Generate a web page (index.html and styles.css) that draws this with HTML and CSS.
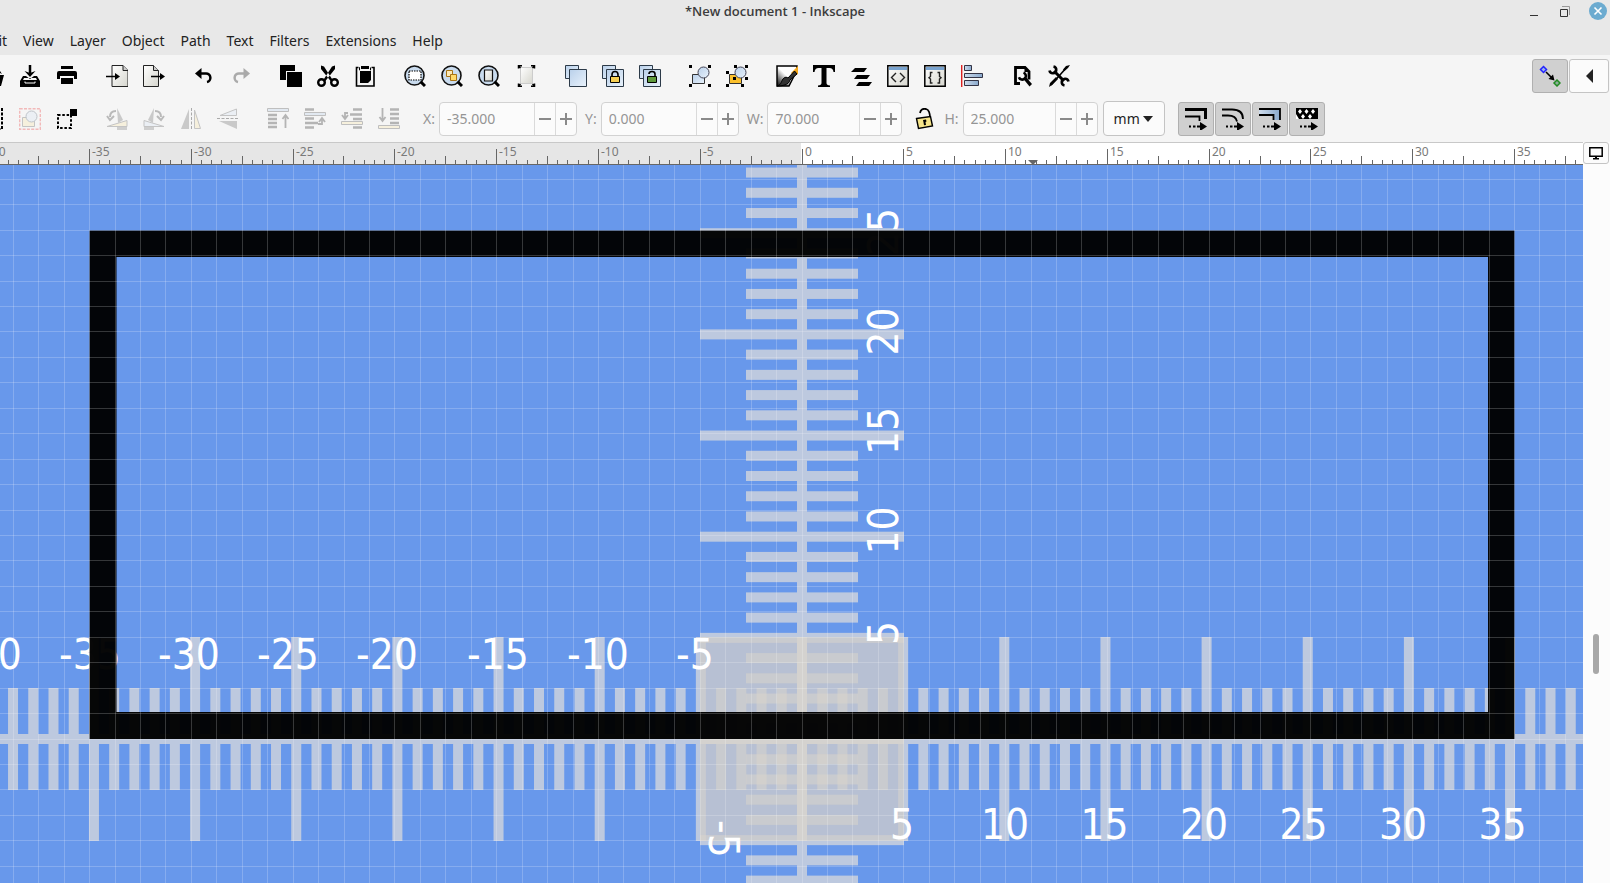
FILE: index.html
```html
<!DOCTYPE html>
<html lang="en">
<head>
<meta charset="utf-8">
<title>*New document 1 - Inkscape</title>
<link rel="stylesheet" href="styles.css">
</head>
<body>
<svg class="defs" aria-hidden="true">
  <defs>
    <linearGradient id="page" x1="0" y1="0" x2="1" y2="1"><stop offset="0" stop-color="#fff"/><stop offset="1" stop-color="#d6d6ce"/></linearGradient>
    <linearGradient id="blue" x1="0" y1="0" x2="1" y2="1"><stop offset="0" stop-color="#b9d0ea"/><stop offset="1" stop-color="#e9f2fb"/></linearGradient>
    <linearGradient id="ink" x1="0" y1="1" x2="1" y2="0"><stop offset="0" stop-color="#000"/><stop offset=".5" stop-color="#fff"/></linearGradient>
    <linearGradient id="fade" x1="0" y1="0" x2="1" y2="0"><stop offset="0" stop-color="#cfdcec"/><stop offset="1" stop-color="#88a8cc"/></linearGradient>
    <g id="lens"><circle cx="10.500" cy="10.500" r="9.500" fill="#c9dbee" stroke="#111" stroke-width="1.600"/><path d="M16.500 16.500l4.500 4.500" stroke="#000" stroke-width="3"/></g>
    <g id="two" stroke="#2c3a48" fill="url(#blue)"><path d="M.5.500h13v13H.500z"/><path d="M4.500 4.500h17v17h-17z"/></g>
    <g id="arrow"><path d="M4 18.500h2m2 0h2.500m1.500 0h5" stroke="#000" stroke-width="2"/><path d="M15 14l7 4.500-7 4.500z"/></g>
    <g id="corners"><path d="M0 0h3v3H0zM19 0h3v3h-3zM0 19h3v3H0zM19 19h3v3h-3z"/></g>
  </defs>
</svg>
<div class="app">
  <header class="titlebar">
    <h1>*New document 1 - Inkscape</h1>
    <div class="window-controls">
      <button aria-label="Minimize"><svg width="12" height="18"><path d="M1 13.500h8" stroke="#333"/></svg></button>
      <button aria-label="Restore"><svg width="12" height="18"><path d="M3 4.500h7.500V13" fill="none" stroke="#999"/><path d="M1.500 7.500h7v7h-7z" fill="none" stroke="#333"/></svg></button>
      <button class="close" aria-label="Close"><svg width="18" height="18"><path d="M5.500 5.500l7 7m0-7l-7 7" stroke="#fff" stroke-width="1.600"/></svg></button>
    </div>
  </header>
  <nav class="menubar">
    <button>Edit</button><button>View</button><button>Layer</button><button>Object</button><button>Path</button><button>Text</button><button>Filters</button><button>Extensions</button><button>Help</button>
  </nav>
  <div class="toolbar commands">
    <div class="group">
      <button aria-label="Open"><svg class="i" viewBox="0 0 22 22"><path d="M2 8h14l1 2h5l-3 11H3z"/><path d="M14 6h4l2 3"/></svg></button>
      <button aria-label="Save"><svg class="i" viewBox="0 0 22 22"><path d="M11 0v8" stroke="#000" stroke-width="2.500"/><path d="M5.500 6l5.500 6 5.500-6-5.500 2zM4 11h3l4 3 4-3h3l3 5v6H1v-6zM4 15h14l-1-2H5z" fill-rule="evenodd"/><path d="M6 16.500v1.500h10v-1.500" stroke="#fff" fill="none"/></svg></button>
      <button aria-label="Print"><svg class="i" viewBox="0 0 22 22"><path d="M5 1h12v3H5zM3 6h16q2 0 2 2v6h-3v-3H4v3H1V8q0-2 2-2zM5 13h12v6H5z"/></svg></button>
    </div>
    <div class="group">
      <button aria-label="Import"><svg class="i" viewBox="0 0 22 22"><path d="M6 .500h11l5 5v16H6z" fill="url(#page)" stroke="#222"/><path d="M17 .500v5h5" fill="#ccc" stroke="#222"/><path d="M0 11.500h11" stroke="#000" stroke-width="1.500"/><path d="M9 8l5 3.500L9 15z"/></svg></button>
      <button aria-label="Export"><svg class="i" viewBox="0 0 22 22"><path d="M.500.500h10l5 5v16H.500z" fill="url(#page)" stroke="#222"/><path d="M10.500.500v5h5" fill="#ccc" stroke="#222"/><path d="M8 11.500h11" stroke="#000" stroke-width="1.500"/><path d="M17 8l5 3.500-5 3.500z"/></svg></button>
    </div>
    <div class="group">
      <button aria-label="Undo"><svg class="i" viewBox="0 0 22 22"><path d="M6 8.500h7a4.300 4.300 0 0 1 1 8.500" fill="none" stroke="#000" stroke-width="2.500"/><path d="M2 8.500L8.500 3v11z"/></svg></button>
      <button aria-label="Redo" disabled><svg class="i" viewBox="0 0 22 22"><g transform="matrix(-1 0 0 1 22 0)"><path d="M6 8.500h7a4.300 4.300 0 0 1 1 8.500" fill="none" stroke="#000" stroke-width="2.500"/><path d="M2 8.500L8.500 3v11z"/></g></svg></button>
    </div>
    <div class="group">
      <button aria-label="Copy"><svg class="i" viewBox="0 0 22 22"><path d="M0 0h15v6H6v9H0zM7 7h15v15H7z"/></svg></button>
      <button aria-label="Cut"><svg class="i" viewBox="0 0 22 22"><path d="M4 .500l3 1 9 14-2 1L4 4zM18 .500l-3 1-9 14 2 1L18 4z"/><g fill="none" stroke="#000" stroke-width="2.400"><circle cx="4.500" cy="17.500" r="3.300"/><circle cx="17.500" cy="17.500" r="3.300"/></g></svg></button>
      <button aria-label="Paste"><svg class="i" viewBox="0 0 22 22"><path d="M4.500 2.500H2.500v18.500h17.500V2.500h-2.500" fill="none" stroke="#000" stroke-width="1.600"/><path d="M7 1h8v3H7zM6 6h11v9l-3 3H6z"/><path d="M5.500 5.300V2.500H6m10.500 0v2.800" fill="none" stroke="#000"/></svg></button>
    </div>
    <div class="group">
      <button aria-label="Zoom selection"><svg class="i" viewBox="0 0 22 22"><use href="#lens"/><path d="M5 6h12v9H5z" fill="#fff" stroke="#000" stroke-width="1.200" stroke-dasharray="1.500 1"/></svg></button>
      <button aria-label="Zoom drawing"><svg class="i" viewBox="0 0 22 22"><use href="#lens"/><g fill="#fce9b8" stroke="#a87416"><path d="M5.500 5.500h6v6h-6z"/><path d="M9.500 9.500h6v6h-6z" fill="#ffd96a"/></g></svg></button>
      <button aria-label="Zoom page"><svg class="i" viewBox="0 0 22 22"><use href="#lens"/><path d="M6.500 5h8v11h-8z" fill="url(#page)" stroke="#111" stroke-width="1.200"/></svg></button>
      <button aria-label="Zoom page width"><svg class="i" viewBox="0 0 22 22"><path d="M5.500 2.500h12v16h-12z" fill="url(#page)" stroke="#ccc"/><path d="M3.500 3.500V.800H7M16 .800h3.500v2.700M3.500 18.500v2.700H7m9 0h3.500v-2.700M3.500 1l2 2M19.500 1l-2 2M3.500 21l2-2m14 2l-2-2" fill="none" stroke="#000" stroke-width="1.500"/></svg></button>
    </div>
    <div class="group">
      <button aria-label="Duplicate"><svg class="i" viewBox="0 0 22 22"><use href="#two"/></svg></button>
      <button aria-label="Clone"><svg class="i" viewBox="0 0 22 22"><use href="#two"/><path d="M10 12V9.500a3 3 0 0 1 6 0V12" fill="none" stroke="#000" stroke-width="1.600"/><path d="M8.500 11.500h9v6h-9z" fill="#f6cf52" stroke="#000"/></svg></button>
      <button aria-label="Unlink clone"><svg class="i" viewBox="0 0 22 22"><use href="#two"/><path d="M10 9a3 2.500 0 0 1 6 0v3" fill="none" stroke="#000" stroke-width="1.600"/><path d="M8.500 11.500h9v6h-9z" fill="#5f9a3c" stroke="#000"/></svg></button>
    </div>
    <div class="group">
      <button aria-label="Group"><svg class="i" viewBox="0 0 22 22"><path d="M3.500 9.500h12v9h-12z" fill="url(#blue)" stroke="#333"/><circle cx="14.500" cy="7.500" r="5.500" fill="url(#blue)" stroke="#445"/><use href="#corners"/></svg></button>
      <button aria-label="Ungroup"><svg class="i" viewBox="0 0 22 22"><path d="M3.500 9.500h12v9h-12z" fill="#fbc02c" stroke="#333"/><circle cx="14.500" cy="7.500" r="5.500" fill="url(#blue)" stroke="#445"/><path d="M8 0h3v3H8zM19 0h3v3h-3zM0 6h3v3H0zM19 12h3v3h-3zM0 19h3v3H0zM15 19h3v3h-3zM7 12h3v3H7z"/></svg></button>
    </div>
    <div class="group">
      <button aria-label="Fill and stroke"><svg class="i" viewBox="0 0 22 22"><path d="M1 1h20v4l-8 16H1z" fill="url(#ink)" stroke="#000" stroke-width="1.500"/><path d="M22 1v8l-4 2-3-3z" fill="#f4a71c"/><path d="M18.500 6l2.500 3-7 6c-1 5-8 6-13 6 5-1 4-6 7-8 1-1 3-1 4 0z" fill="#333" stroke="#000"/></svg></button>
      <button aria-label="Text and font"><svg class="i" viewBox="0 0 22 22"><path d="M0 0h22v7h-1.500q-.500-4-4-4H13.500v15q0 2 3.500 2.500V22H5v-1.500q3.500-.500 3.500-2.500V3H5.500q-3.500 0-4 4H0z"/></svg></button>
      <button aria-label="Layers"><svg class="i" viewBox="0 0 22 22"><path d="M5 3h12l-3 4H1zM7 10h13l-3 4H4zM9 17h13l-3 4H6z"/></svg></button>
      <button aria-label="XML editor"><svg class="i" viewBox="0 0 22 22"><path d="M.800.800h20.400v20.400H.800z" fill="url(#page)" stroke="#000" stroke-width="1.500"/><path d="M2 2h18v3H2z" fill="#79a3cf"/><path d="M9 8l-4.500 4.500L9 17m4-9l4.500 4.500L13 17" fill="none" stroke="#222" stroke-width="1.400"/></svg></button>
      <button aria-label="Selectors and CSS"><svg class="i" viewBox="0 0 22 22"><path d="M.800.800h20.400v20.400H.800z" fill="url(#page)" stroke="#000" stroke-width="1.500"/><path d="M2 2h18v3H2z" fill="#79a3cf"/><path d="M8.500 7.500h-2v4l-1.500 1.200 1.500 1.300v4h2m5-10.500h2v4l1.500 1.200-1.500 1.300v4h-2" fill="none" stroke="#222" stroke-width="1.400"/></svg></button>
      <button aria-label="Align and distribute"><svg class="i" viewBox="0 0 22 22"><path d="M.700 0v22" stroke="#d22" stroke-width="1.400"/><g fill="url(#fade)" stroke="#334"><path d="M3.500.500h7v5h-7z"/><path d="M3.500 8.500h18v4h-18z"/><path d="M3.500 15.500h14v5h-14z"/></g></svg></button>
    </div>
    <div class="group">
      <button aria-label="Document properties"><svg class="i" viewBox="0 0 22 22"><path d="M9 18.500H4.500v-16h9.500l4 4v8" fill="none" stroke="#000" stroke-width="2.800"/><path d="M13.500 2v5h5z"/><path d="M12.500 7.600a3.600 3.600 0 1 1-4.600 4.600" fill="none" stroke="#000" stroke-width="2.600"/><path d="M12 13.500l2.500-2 6.500 7.500-2.500 2.500z"/></svg></button>
      <button aria-label="Preferences"><svg class="i" viewBox="0 0 22 22"><path d="M3 20L19 2" stroke="#000" stroke-width="1.600"/><path d="M1 22l1-4 6-6 2 2-6 6zM22 0l-4 1-3 3.500 1.500 1.500L20 3z"/><path d="M6 6l10 10" stroke="#000" stroke-width="3"/><path d="M5.500 1.500a3.400 3.400 0 1 1-4 4M16.500 20.500a3.400 3.400 0 1 1 4-4" fill="none" stroke="#000" stroke-width="2.600"/></svg></button>
    </div>
    <div class="snap">
      <button class="toggle on" aria-label="Snap"><svg class="i" viewBox="0 0 22 22"><path d="M4.500 1.500l3 3-3 3-3-3z" fill="#9bb5ec" stroke="#22f" stroke-width="1.500"/><path d="M18 15l3 3-3 3-3-3z" fill="#8cae9a" stroke="#228b22" stroke-width="1.500"/><path d="M7 7l6 6" stroke="#000" stroke-width="1.600"/><path d="M15.500 15.500l-6-1.500 4.500-4.500z"/></svg></button>
      <button class="toggle more" aria-label="More snapping options"><svg width="8" height="14"><path d="M8 0v14L1 7z" fill="#222"/></svg></button>
    </div>
  </div>
  <div class="toolbar options">
    <div class="group">
      <button aria-label="Select all"><svg class="i" viewBox="0 0 22 22"><path d="M1 1h19v20H1z" fill="none" stroke="#000" stroke-width="2" stroke-dasharray="3 1.500"/></svg></button>
      <button aria-label="Deselect" disabled><svg class="i" viewBox="0 0 22 22"><path d="M.700.700h20.600v20.600H.700z" fill="none" stroke="#e33" stroke-width="1.400" stroke-dasharray="3 1.300"/><path d="M3.500 9.500h12v9h-12z" fill="#fbe6a8" stroke="#555"/><circle cx="12.500" cy="8.500" r="5.500" fill="#d5e2f2" stroke="#456"/></svg></button>
      <button aria-label="Touch selection"><svg class="i" viewBox="0 0 22 22"><path d="M2 7h13v13H2z" fill="none" stroke="#000" stroke-width="2" stroke-dasharray="2.500 1.800"/><path d="M14 1h7v7h-7z"/></svg></button>
    </div>
    <div class="group">
      <button aria-label="Rotate left" disabled><svg class="i" viewBox="0 0 22 22"><path d="M11 0l6 12-5 3z" fill="#666"/><path d="M1 18.500l20-6v6z" fill="#fbe6a8" stroke="#555"/><path d="M11 19h10v3H11z" fill="#777"/><path d="M10 3q-6 0-6 6M1 8l3 4 4-4" fill="none" stroke="#333" stroke-width="2"/></svg></button>
      <button aria-label="Rotate right" disabled><svg class="i" viewBox="0 0 22 22"><path d="M11 0L5 12l5 3z" fill="#666"/><path d="M21 18.500l-20-6v6z" fill="#d5e2f2" stroke="#555"/><path d="M1 19h10v3H1z" fill="#777"/><path d="M12 3q6 0 6 6M14 8l4 4 3-4" fill="none" stroke="#333" stroke-width="2"/></svg></button>
      <button aria-label="Flip horizontal" disabled><svg class="i" viewBox="0 0 22 22"><path d="M9 1v20H1z" fill="#666"/><path d="M11.500 0v22" stroke="#000" stroke-dasharray="3 1.500"/><path d="M14.500 2v18.500h6z" fill="#fbe6a8" stroke="#555"/></svg></button>
      <button aria-label="Flip vertical" disabled><svg class="i" viewBox="0 0 22 22"><path d="M20 13v8L2 13z" fill="#666"/><path d="M0 10.500h22" stroke="#000" stroke-dasharray="3 1.500"/><path d="M19.500 1v6.500H3z" fill="#d5e2f2" stroke="#555"/></svg></button>
    </div>
    <div class="group">
      <button aria-label="Raise to top" disabled><svg class="i" viewBox="0 0 22 22"><path d="M.500.500h21v3H.500z" fill="#b9d0ea" stroke="#444"/><path d="M1 7h9M1 11h9M1 15h9M1 19h9" stroke="#222" stroke-width="2.500"/><path d="M18.500 20V7m-3 4l3-4 3 4" fill="none" stroke="#222" stroke-width="1.800"/></svg></button>
      <button aria-label="Raise" disabled><svg class="i" viewBox="0 0 22 22"><path d="M1 1.500h9M1 10.500h9M1 15h13M1 19.500h9" stroke="#222" stroke-width="2.500"/><path d="M.500 4.500h21v3H.500z" fill="#b9d0ea" stroke="#444"/><path d="M14 16h4v-5m-3 3l3-4 3 4" fill="none" stroke="#222" stroke-width="1.800"/></svg></button>
      <button aria-label="Lower" disabled><svg class="i" viewBox="0 0 22 22"><path d="M12 1.500h9M9 6.500h12M12 11h9M12 19.500h9" stroke="#222" stroke-width="2.500"/><path d="M.500 13.500h21v3H.500z" fill="#fbe6a8" stroke="#444"/><path d="M7 5H4v5m-3-3l3 4 3-4" fill="none" stroke="#222" stroke-width="1.800"/></svg></button>
      <button aria-label="Lower to bottom" disabled><svg class="i" viewBox="0 0 22 22"><path d="M12 1.500h9M12 6h9M12 10.500h9M12 15h9" stroke="#222" stroke-width="2.500"/><path d="M.500 17.500h21v3H.500z" fill="#fbe6a8" stroke="#444"/><path d="M4.500 0v13m-3-4l3 4 3-4" fill="none" stroke="#222" stroke-width="1.800"/></svg></button>
    </div>
    <div class="fields">
      <label for="x">X:</label>
      <div class="spin wide"><input id="x" value="-35.000" disabled><button aria-label="Decrease X" disabled></button><button class="plus" aria-label="Increase X" disabled></button></div>
      <label for="y">Y:</label>
      <div class="spin wide"><input id="y" value="0.000" disabled><button aria-label="Decrease Y" disabled></button><button class="plus" aria-label="Increase Y" disabled></button></div>
      <label for="w">W:</label>
      <div class="spin"><input id="w" value="70.000" disabled><button aria-label="Decrease W" disabled></button><button class="plus" aria-label="Increase W" disabled></button></div>
      <button class="lock" aria-label="Lock ratio"><svg class="i" viewBox="0 0 22 22"><path d="M7 5q1-5 6-4 4 1 4 9" fill="none" stroke="#000" stroke-width="1.800"/><path d="M3.500 10.500l14-2 2 9.500-14 2.500z" fill="#f6e58a" stroke="#000" stroke-width="1.400"/><path d="M10 12l3-.500.500 2-1 .500.500 3-2 .300-.500-3z"/></svg></button>
      <label for="h">H:</label>
      <div class="spin"><input id="h" value="25.000" disabled><button aria-label="Decrease H" disabled></button><button class="plus" aria-label="Increase H" disabled></button></div>
      <div class="unit"><select aria-label="Unit"><option>mm</option></select><svg width="10" height="6"><path d="M0 0h10L5 6z" fill="#222"/></svg></div>
    </div>
    <div class="affect">
      <button class="toggle on" aria-label="Scale stroke width"><svg class="i" viewBox="0 0 22 22"><path d="M0 1.500h20.500V11" fill="none" stroke="#000" stroke-width="3"/><path d="M0 8.500h14.500V13" fill="none" stroke="#000" stroke-width="1.800"/><use href="#arrow"/></svg></button>
      <button class="toggle on" aria-label="Scale rounded corners"><svg class="i" viewBox="0 0 22 22"><path d="M0 1.500h10q11 0 11 9.500M0 7.500h6q8 0 9 6" fill="none" stroke="#000" stroke-width="1.800"/><use href="#arrow"/></svg></button>
      <button class="toggle on" aria-label="Move gradients"><svg class="i" viewBox="0 0 22 22"><path d="M0 1h21v11h-6V7H0z" fill="url(#fade)"/><path d="M0 1h21v11M0 7h14.500v5" fill="none" stroke="#000" stroke-width="1.800"/><use href="#arrow"/></svg></button>
      <button class="toggle on" aria-label="Move patterns"><svg class="i" viewBox="0 0 22 22"><path d="M0 0h22v11H0z"/><path d="M4 1l2 2.500L4 6 2 3.500zM10.500 1l2 2.500-2 2.500-2-2.500zM17 1l2 2.500L17 6l-2-2.500zM0 6l3 5H0zM7 6l2 2.500L7 11 5 8.500zM14 6l2 2.500-2 2.500-2-2.500z" fill="#fff"/><use href="#arrow"/></svg></button>
    </div>
  </div>
  <main class="workspace">
    <div class="view">
      <svg class="ruler" id="ruler" role="img" aria-label="Horizontal ruler"></svg>
      <svg class="canvas" id="canvas" role="img" aria-label="Drawing canvas"></svg>
    </div>
    <aside class="side">
      <button class="toggle display" aria-label="Display mode"><svg width="14" height="13"><path d="M.800.800h12.400v8.400H.800z" fill="none" stroke="#000" stroke-width="1.500"/><path d="M6 9h2v2h2v1.500H4V11h2z"/></svg></button>
      <div class="track"><div class="thumb"></div></div>
    </aside>
  </main>
</div>
<script src="canvas.js"></script>
</body>
</html>
```
FILE: styles.css
```css
* { box-sizing: border-box; }
body { margin: 0; font-family: "Noto Sans", "Open Sans", sans-serif; font-size: 14px; color: #222; background: #f5f5f5; overflow: hidden; }
.defs { position: absolute; width: 0; height: 0; }
.app { display: flex; flex-direction: column; height: 100vh; }
button { margin: 0; padding: 0; border: 0; background: none; font: inherit; color: inherit; display: flex; align-items: center; justify-content: center; flex: none; }
svg { display: block; }
.i { width: 22px; height: 22px; }

.titlebar { display: grid; grid-template-columns: 1fr auto 1fr; height: 24px; flex: none; margin-left: -60px; background: #e8e8e8; }
.titlebar h1 { grid-column: 2; margin: 0; font-family: "Open Sans", "Noto Sans", sans-serif; font-size: 13px; font-weight: 600; line-height: 22px; color: #3c3c3c; }
.window-controls { display: flex; justify-content: flex-end; align-items: flex-start; gap: 18px; padding: 2px 3px 0 0; }
.close { border-radius: 9px; background: #6cabd0; }

.menubar { display: flex; height: 31px; flex: none; gap: 16px; margin-left: -18px; padding-top: 1px; background: #e8e8e8; }

.toolbar { display: flex; align-items: center; gap: 13px; flex: none; height: 43px; background: #f5f5f5; padding-bottom: 1px; }
.group { display: flex; flex: none; }
.group:first-child { margin-left: -26px; }
.group button { width: 37px; height: 34px; }
.group button:disabled { opacity: .3; }
.options { height: 44px; padding-bottom: 3px; }
.toggle { width: 36px; height: 34px; border: 1px solid #c4c4c4; border-radius: 3px; background: #fbfbfb; }
.toggle.on { background: #d0d0d0; border-color: #b0b0b0; }
.snap { display: flex; gap: 1px; margin-left: auto; padding-right: 1px; }
.toggle.more { width: 40px; }
.affect { display: flex; gap: 1px; }

.fields { display: flex; align-items: center; flex: none; color: #959595; }
.fields label { padding: 0 4px 0 8px; }
.fields label:first-child { padding-left: 3px; }
.spin { display: flex; width: 135px; height: 34px; border: 1px solid #d2d2d2; border-radius: 4px; background: #fbfbfb; }
.spin.wide { width: 138px; }
.spin input { flex: 1; min-width: 0; padding: 0 7px; border: 0; background: none; font: inherit; color: #959595; }
.spin button { width: 21px; border-left: 1px solid #dadada; background: linear-gradient(#8a8a8a, #8a8a8a) center / 12px 2px no-repeat; }
.spin .plus { background: linear-gradient(#8a8a8a, #8a8a8a) center / 12px 2px no-repeat, linear-gradient(#8a8a8a, #8a8a8a) center / 2px 12px no-repeat; }
.lock { width: 22px; margin: 0 1px 0 11px; }
.unit { display: grid; align-items: center; margin-left: 5px; width: 62px; height: 35px; border: 1px solid #c4c4c4; border-radius: 4px; background: #fbfbfb; }
.unit select { grid-area: 1 / 1; height: 100%; padding: 0 10px; appearance: none; border: 0; background: none; font: inherit; color: #222; }
.unit svg { grid-area: 1 / 1; justify-self: end; margin-right: 11px; pointer-events: none; }

.workspace { display: flex; flex: 1; min-height: 0; }
.view { display: flex; flex-direction: column; flex: 1; min-width: 0; }
.ruler { width: 100%; height: 23px; flex: none; border-top: 1px solid #c8c8c8; background: #fff; }
.ruler text { font-size: 12px; fill: #7a7a7a; }
.canvas { flex: 1; width: 100%; min-height: 0; background: #6898eb; overflow: hidden; }
.canvas text { font-family: "DejaVu Sans Condensed", "DejaVu Sans", sans-serif; font-size: 42px; fill: #fff; }
.side { display: flex; flex-direction: column; width: 27px; flex: none; background: #fcfcfc; }
.toggle.display { width: 26px; height: 22px; }
.track { flex: 1; padding: 470px 0 0 10px; }
.thumb { width: 6px; height: 40px; border-radius: 3px; background: #a8a8a8; }
```
FILE: canvas.js
```js
// Origin of the document in canvas pixels
const OX = 802, OY = 574;
const ruler = document.getElementById('ruler');
const canvas = document.getElementById('canvas');
const rect = (x, y, w, h, extra = '') => `<rect x="${x}" y="${y}" width="${w}" height="${h}" ${extra}/>`;

function drawRuler() {
  const step = 10.179;
  const last = Math.floor((ruler.clientWidth - OX) / step);
  let out = rect(0, 0, 801, 22, 'fill="#e6e6e6"');
  for (let i = -79; i <= last; i++) {
    const x = Math.floor(OX + i * step);
    const top = i % 10 === 0 ? 6 : i % 5 === 0 ? 13 : 17;
    out += rect(x, top, 1, 22 - top, 'fill="#666"');
    if (i % 10 === 0) out += `<text x="${x + 3}" y="13">${i / 2}</text>`;
  }
  out += '<text x="-8" y="13">40</text>';
  out += rect(0, 21, '100%', 1, 'fill="#666"');
  out += '<path d="M1028 17h10l-5 5z" fill="#666"/>';
  ruler.innerHTML = out;
}

function ticks() {
  const pitch = 20.23;
  let h = '', v = '';
  for (let i = -40; i <= 45; i++) {
    if (i === 0) continue;
    const half = i % 5 === 0 ? 102 : 51;
    h += rect(OX + i * pitch - 5, OY - half, 10, half * 2);
  }
  for (let i = -15; i <= 30; i++) {
    if (i === 0) continue;
    const half = i % 5 === 0 ? 102 : 56;
    v += rect(OX - half, OY - i * pitch - 5, half * 2, 10);
  }
  return { h, v };
}

function drawCanvas() {
  const { h, v } = ticks();
  const axes = rect(-10, OY - 5, 4000, 10) + rect(OX - 5, -10, 10, 3000);
  let out = '<defs><clipPath id="square">' + rect(700, OY - 102, 204, 204) + '</clipPath></defs>';
  out += `<g fill="#bdc9df">${h}${v}${axes}</g>`;
  out += rect(700, OY - 102, 204, 204, 'fill="#b7c0d3"');
  out += `<g clip-path="url(#square)"><g fill="#dcd6cc" fill-opacity=".5">${h}${v}</g><g fill="#d4d2cf">${axes}</g></g>`;

  const label = (x, y, s, turn = 0) => `<text transform="translate(${x} ${y}) rotate(${turn})">${s}</text>`;
  [-40, -35, -30, -25, -20].forEach((n, i) => { out += label(-40 + i * 99, 504, n); });
  out += label(467, 504, -15) + label(567, 504, -10) + label(676, 504, -5) + label(890, 674, 5);
  [10, 15, 20, 25, 30, 35].forEach((n, i) => { out += label(981 + i * 99.500, 674, n); });
  [25, 20, 15, 10].forEach((n, i) => { out += label(898, 91 + i * 99.500, n, -90); });
  out += label(898, 480, 5, -90) + label(709, 655, -5, 90);

  out += '<path fill-rule="evenodd" fill="#000" fill-opacity=".97" d="M89.500 65.500H1514.500V574H89.500zM116.500 92V547H1488V92z"/>';

  let grid = '';
  for (let k = -31; k <= 120; k++) grid += rect(Math.floor(802.05 + k * 25.446), 0, 1, '100%');
  for (let k = -22; k <= 40; k++) grid += rect(0, Math.floor(574.05 + k * 25.446), '100%', 1);
  out += `<g fill="#fff" fill-opacity=".2">${grid}</g>`;
  canvas.innerHTML = out;
}

drawRuler();
drawCanvas();
window.addEventListener('resize', drawRuler);
```
